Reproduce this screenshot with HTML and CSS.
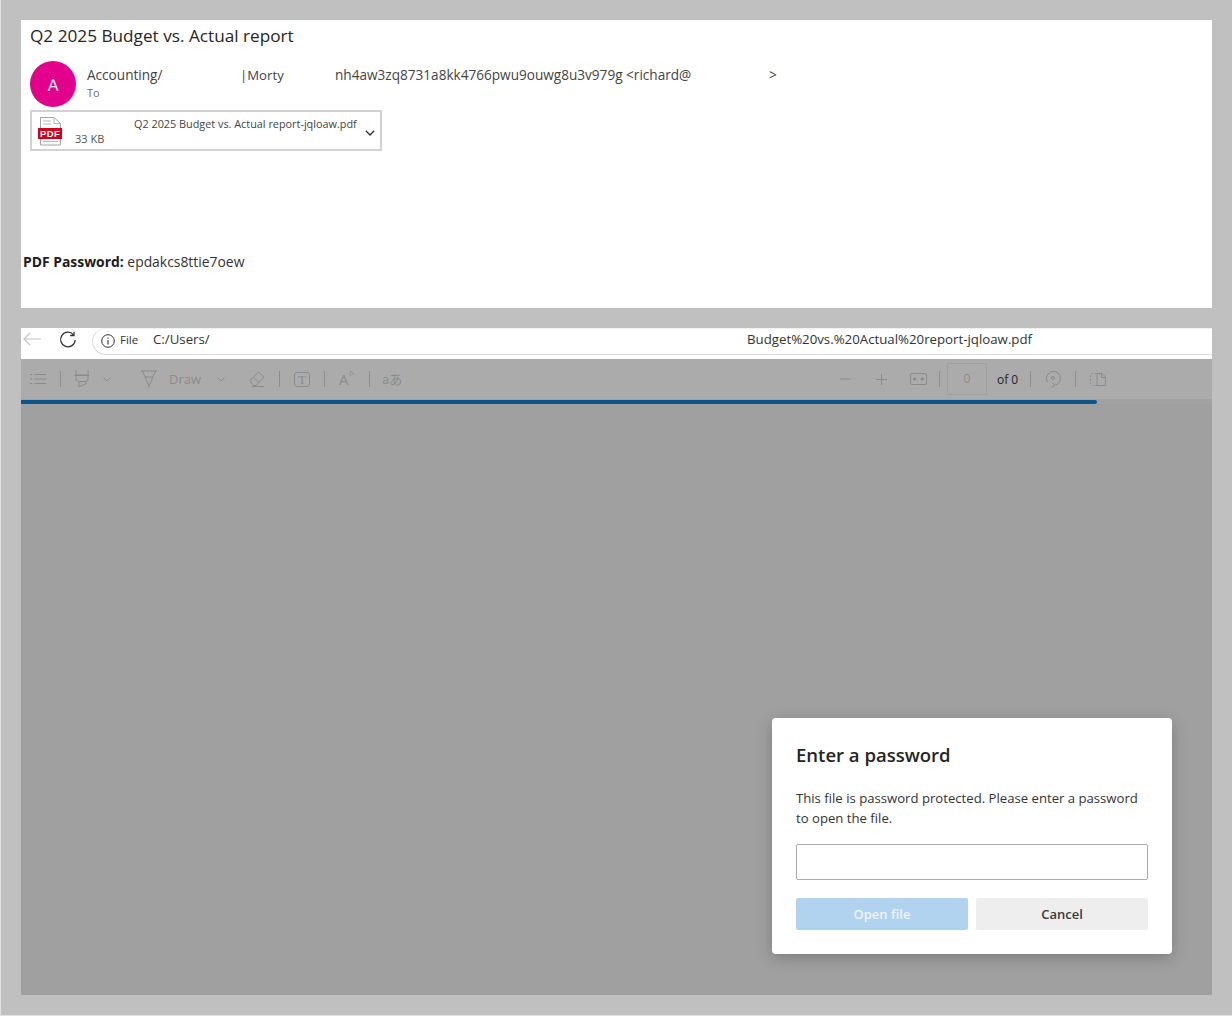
FILE: index.html
```html
<!DOCTYPE html>
<html lang="en">
<head>
<meta charset="utf-8">
<title>Q2 2025 Budget vs. Actual report</title>
<link rel="stylesheet" href="styles.css">
</head>
<body>
<div class="page">
  <section class="email">
    <h1 class="subject">Q2 2025 Budget vs. Actual report</h1>
    <div class="sender">
      <div class="avatar">A</div>
      <div class="sender-text">
        <div class="from"><span class="from-a">Accounting/</span><span class="from-b">|Morty</span><span class="from-c">nh4aw3zq8731a8kk4766pwu9ouwg8u3v979g &lt;richard@</span><span class="from-d">&gt;</span></div>
        <div class="to">To</div>
      </div>
    </div>
    <div class="attachment">
      <svg class="pdf" width="26" height="30" viewBox="0 0 26 30">
        <path d="M2.500 1.500H16L22.500 7.500V29H2.500Z" fill="#fff" stroke="#a3a3a3"/>
        <path d="M16 1.500V7.500H22.500M5 5H13M5 8H13M5 25.500H20" fill="none" stroke="#bbb"/>
        <rect x="0" y="12" width="24" height="11" fill="#d0021b"/>
        <text x="12" y="21" class="pdf-label" text-anchor="middle">PDF</text>
      </svg>
      <div class="att-text">
        <div class="att-name">Q2 2025 Budget vs. Actual report-jqloaw.pdf</div>
        <div class="att-size">33 KB</div>
      </div>
      <svg class="att-chev" width="10" height="6" viewBox="0 0 10 6"><path d="M.8.800 5 5 9.200.800" fill="none" stroke="#333" stroke-width="1.300"/></svg>
    </div>
    <p class="pw"><b>PDF Password:</b> epdakcs8ttie7oew</p>
  </section>

  <section class="browser">
    <div class="addr">
      <svg class="back" width="18" height="14" viewBox="0 0 18 14"><path d="M7 1 1 7l6 6M1 7h17" fill="none" stroke="#c4c4c4" stroke-width="1.100"/></svg>
      <svg class="reload" width="18" height="18" viewBox="0 0 18 18"><path d="M14.500 3.800A7.300 7.300 0 1 0 16.200 9" fill="none" stroke="#333" stroke-width="1.300"/><path d="M15 .8v3.700h-3.800" fill="none" stroke="#333" stroke-width="1.300"/></svg>
      <div class="pill">
        <svg width="14" height="14" viewBox="0 0 14 14"><circle cx="7" cy="7" r="6.300" fill="none" stroke="#333"/><path d="M7 6v4.500M7 3.500v1.300" stroke="#333" stroke-width="1.100"/></svg>
        <span class="file">File</span>
        <span class="path">C:/Users/</span>
        <span class="url">Budget%20vs.%20Actual%20report-jqloaw.pdf</span>
      </div>
    </div>
    <div class="toolbar">
      <svg class="ic" width="16" height="12" viewBox="0 0 16 12"><path d="M4.500 1.500H16M4.500 6H16M4.500 10.500H16M0 1.500h2M0 6h2M0 10.500h2" stroke="#8b8b8b"/></svg>
      <i class="sep sep-first"></i>
      <svg class="ic" width="16" height="18" viewBox="0 0 16 18"><path d="M2 0v5h12V0M.5 5.500h15M2 5.500V10l3 1.500V17l7-3.500v-2l2-1.500V5.500M5 11.500h7" fill="none" stroke="#8b8b8b"/></svg>
      <svg class="chev" width="8" height="5" viewBox="0 0 8 5"><path d="M.5.500 4 4 7.500.500" fill="none" stroke="#929292"/></svg>
      <svg class="ic m-draw" width="16" height="18" viewBox="0 0 16 18"><path d="M0 1h16M1.500 1 8 16l6.500-15M4 7h8M8 16v2" fill="none" stroke="#8b8b8b"/></svg>
      <span class="draw">Draw</span>
      <svg class="chev m-chev" width="8" height="5" viewBox="0 0 8 5"><path d="M.5.500 4 4 7.500.500" fill="none" stroke="#929292"/></svg>
      <svg class="ic m-erase" width="16" height="16" viewBox="0 0 16 16"><path d="M1 9.500 9.500 1 15 6 7 14.500H4.500ZM4.500 6.500 10 11.500M3 15.500h12" fill="none" stroke="#8b8b8b"/></svg>
      <i class="sep"></i>
      <span class="tbox">T</span>
      <i class="sep"></i>
      <span class="aa">A<svg width="6" height="7" viewBox="0 0 6 7"><path d="M1 0c2 1 3 2 3.500 4M0 2.500c1 .5 1.500 1 2 2.500" fill="none" stroke="#8b8b8b"/></svg></span>
      <i class="sep"></i>
      <span class="lang">aあ</span>
      <div class="tools-right">
        <svg width="11" height="2" viewBox="0 0 11 2"><path d="M0 1h11" stroke="#8b8b8b"/></svg>
        <svg class="m-plus" width="11" height="11" viewBox="0 0 11 11"><path d="M0 5.500h11M5.500 0v11" stroke="#8b8b8b"/></svg>
        <svg class="m-fit" width="17" height="12" viewBox="0 0 17 12"><rect x=".5" y=".5" width="16" height="11" rx="1.500" fill="none" stroke="#8b8b8b"/><path d="M3.500 6h3M10.500 6h3M5 4.500 3.500 6 5 7.500M12 4.500 13.500 6 12 7.500" fill="none" stroke="#777"/></svg>
        <i class="sep m-sep1"></i>
        <span class="page-num">0</span>
        <span class="of">of 0</span>
        <i class="sep m-sep2"></i>
        <svg class="m-rot" width="16" height="18" viewBox="0 0 16 18"><path d="M2.500 12A7 7 0 1 1 10.500 15M6.500 17.500 10 15l-3-2.500" fill="none" stroke="#8b8b8b"/><circle cx="8" cy="8" r="1.500" fill="none" stroke="#8b8b8b"/></svg>
        <i class="sep m-sep3"></i>
        <svg class="m-view" width="16" height="13" viewBox="0 0 16 13"><path d="M7 .5H2.500a2 2 0 0 0-2 2v8a2 2 0 0 0 2 2H7" fill="none" stroke="#8b8b8b" stroke-dasharray="2 1.500"/><path d="M7 .5h5l3.500 3.500v8.500H7ZM11.500.5V4.500h4" fill="none" stroke="#8b8b8b"/></svg>
      </div>
    </div>
    <div class="progress"><div class="bar"></div></div>
    <div class="viewer"></div>
    <div class="dialog">
      <h2 class="d-title">Enter a password</h2>
      <p class="d-body">This file is password protected. Please enter a password to open the file.</p>
      <input class="d-input" type="password" aria-label="Password">
      <div class="d-actions">
        <button class="btn btn-open" type="button">Open file</button>
        <button class="btn btn-cancel" type="button">Cancel</button>
      </div>
    </div>
  </section>
</div>
</body>
</html>
```
FILE: styles.css
```css
* { box-sizing: border-box; }
html, body { margin: 0; padding: 0; }
body {
  font-family: "Open Sans", "Noto Sans", "Liberation Sans", sans-serif;
  color: #242424;
  background: #c0c0c0;
}
.page {
  width: 1232px;
  height: 1016px;
  display: flex;
  flex-direction: column;
  gap: 20px;
  padding: 20px 20px 20px 20px;
  border-left: 1px solid #e2e2e2;
  border-bottom: 1px solid #e2e2e2;
  overflow: hidden;
}

/* Email */
.email {
  height: 288px;
  background: #fff;
  display: flex;
  flex-direction: column;
  padding: 4px 0 0 9px;
}
.subject {
  margin: 0;
  font-size: 17.200px;
  line-height: 24px;
  font-weight: 400;
  color: #262626;
}
.sender {
  display: flex;
  gap: 11px;
  margin-top: 13px;
}
.avatar {
  width: 46px;
  height: 46px;
  border-radius: 50%;
  background: #e3008c;
  color: #fff;
  font-size: 17px;
  display: flex;
  align-items: center;
  justify-content: center;
}
.sender-text { padding-top: 4px; }
.from {
  display: flex;
  font-size: 13.600px;
  line-height: 20px;
  color: #444;
  white-space: nowrap;
}
.from-a { width: 153px; }
.from-b { width: 95px; font-size: 13.200px; }
.from-c { width: 434px; }
.to {
  font-size: 11px;
  line-height: 14px;
  margin-top: 1px;
  color: #6e6e6e;
}
.attachment {
  width: 352px;
  height: 41px;
  margin-top: 3px;
  border: 2px solid #d2d2d2;
  display: flex;
  position: relative;
  color: #444;
}
.pdf { margin: 4px 0 0 6px; flex: none; }
.att-text { margin-left: 11px; width: 291px; }
.att-name {
  font-size: 10.850px;
  line-height: 14px;
  margin: 5px 0 0 59px;
  white-space: nowrap;
}
.att-size {
  font-size: 11px;
  line-height: 14px;
  margin-top: 1px;
  color: #555;
}
.att-chev { margin: 18px 0 0 -1px; }
.pdf-label {
  font-family: "Liberation Sans", sans-serif;
  font-weight: 700;
  font-size: 9.500px;
  letter-spacing: .4px;
  fill: #fff;
}
.pw {
  margin: 101px 0 0 -7px;
  font-size: 13.900px;
  line-height: 20px;
  color: #333;
}
.pw b { color: #1c1c1c; }

/* Browser */
.browser {
  height: 667px;
  display: flex;
  flex-direction: column;
  position: relative;
}
.addr {
  height: 31px;
  background: #fff;
  display: flex;
  align-items: flex-start;
  padding-left: 2px;
}
.back { margin-top: 4px; flex: none; }
.reload { margin: 3px 0 0 18px; flex: none; }
.pill {
  flex: 1;
  height: 27px;
  margin-left: 15px;
  border: 1px solid #dcdcdc;
  border-top-color: #f0f0f0;
  border-right: 0;
  border-radius: 14px 0 0 14px;
  display: flex;
  align-items: center;
  padding: 0 0 5px 8px;
  font-size: 13.250px;
  color: #333;
  white-space: nowrap;
}
.pill svg { margin-top: 3px; }
.file { margin-left: 5px; width: 33px; font-size: 11.500px; }
.path { width: 594px; }
.toolbar {
  height: 41px;
  background: #ababab;
  display: flex;
  align-items: center;
  gap: 14px;
  padding-left: 9px;
  color: #8b8b8b;
  border-bottom: 1px solid #a2a2a2;
}
.toolbar svg { flex: none; }
.sep { width: 1px; height: 16px; background: #8d8d8d; flex: none; }
.sep-first { margin-right: -1px; }
.chev { margin-left: -1px; }
.m-draw { margin-left: 16px; }
.draw { font-size: 13px; margin-left: -2px; width: 32px; }
.m-chev { margin-left: 2px; }
.m-erase { margin-left: 10px; }
.tbox {
  width: 16px;
  height: 15px;
  border: 1px solid #8b8b8b;
  border-radius: 3px;
  font-size: 13px;
  line-height: 13px;
  text-align: center;
  font-family: "Liberation Serif", serif;
}
.aa { width: 16px; font-size: 15px; display: flex; align-items: flex-start; line-height: 18px; }
.aa svg { margin-top: 1px; }
.lang { font-size: 13px; line-height: 16px; width: 20px; font-family: "Noto Sans CJK JP", sans-serif; margin-left: -2px; white-space: nowrap; }
.tools-right {
  margin-left: auto;
  padding-right: 106px;
  display: flex;
  align-items: center;
}
.m-plus { margin-left: 25px; }
.m-fit { margin-left: 23px; }
.m-sep1 { margin-left: 12px; }
.page-num {
  width: 40px;
  height: 32px;
  margin-left: 7px;
  border: 1px solid #a0a0a0;
  font-size: 12px;
  line-height: 30px;
  text-align: center;
}
.of { width: 33px; margin-left: 10px; font-size: 12px; color: #262626; }
.m-sep2 { margin-left: 0; }
.m-rot { margin-left: 14px; }
.m-sep3 { margin-left: 14px; }
.m-view { margin-left: 14px; }
.progress { height: 4px; background: #a2a2a2; flex: none; }
.bar { width: 1076px; height: 4px; background: #0f5486; border-radius: 0 2px 2px 0; }
.viewer { flex: 1; background: #a0a0a0; }

/* Dialog */
.dialog {
  position: absolute;
  left: 751px;
  top: 390px;
  width: 400px;
  height: 236px;
  background: #fff;
  border-radius: 4px;
  box-shadow: 0 4px 16px rgba(0, 0, 0, .22);
  padding: 24px;
}
.d-title {
  margin: 0;
  font-size: 18.500px;
  line-height: 26px;
  font-weight: 600;
  color: #242424;
}
.d-body {
  margin: 20px 0 0;
  font-size: 13.150px;
  line-height: 20px;
  color: #333;
}
.d-input {
  display: block;
  width: 352px;
  height: 36px;
  margin-top: 16px;
  border: 1px solid #ababab;
  border-radius: 2px;
  background: #fff;
}
.d-actions { display: flex; gap: 8px; margin-top: 18px; }
.btn {
  width: 172px;
  height: 32px;
  border: 0;
  border-radius: 2px;
  font-family: inherit;
  font-size: 13px;
  font-weight: 600;
}
.btn-open { background: #b1d3ef; color: #eef5fb; }
.btn-cancel { background: #eeeeee; color: #3a3a3a; }
```
